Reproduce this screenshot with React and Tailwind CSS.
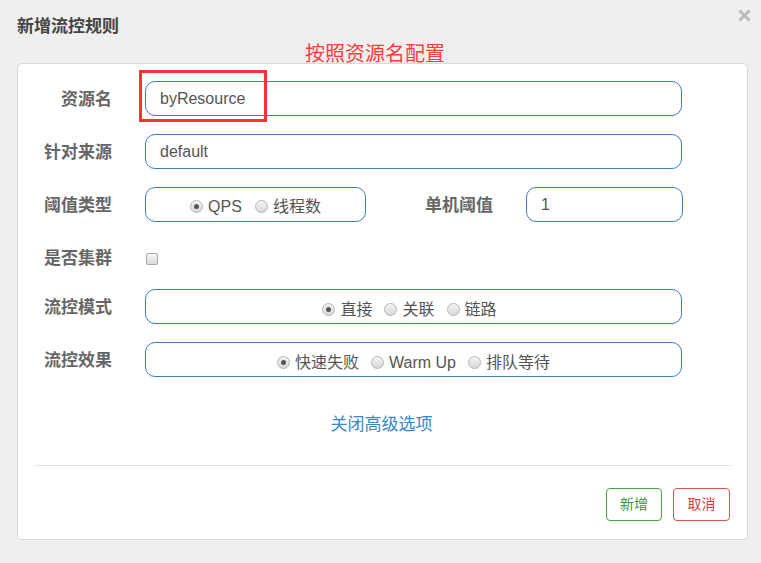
import React from "react";

const FONT = { fontFamily: '"Liberation Sans", "Noto Sans CJK SC", sans-serif' };

function Radio({ checked, label }) {
  return (
    <span className="flex items-center gap-[5px]">
      <span className="w-[13px] h-[13px] rounded-full border border-[#b5b5b5] bg-gradient-to-b from-[#f4f4f4] to-[#d8d8d8] flex items-center justify-center">
        {checked && <span className="w-[5px] h-[5px] rounded-full bg-[#555]" />}
      </span>
      <span className="text-[16px] text-[#555] leading-none">{label}</span>
    </span>
  );
}

function Label({ children, className = "" }) {
  return (
    <div className={"text-right font-bold text-[17px] text-[#666] pt-[3px] " + className}>{children}</div>
  );
}

const boxCls =
  "h-[35px] border border-[#3b7dbf] rounded-[10px] bg-white flex items-center";

export default function App() {
  return (
    <div className="w-[761px] h-[563px] bg-[#efefef] relative overflow-hidden" style={FONT}>
      <div className="h-[63px] pl-[17px] pt-[15px]">
        <div className="text-[17px] font-bold text-[#444] leading-[24px]">新增流控规则</div>
      </div>
      <svg className="absolute left-[738px] top-[9px]" width="13" height="13" viewBox="0 0 13 13">
        <path d="M1.5 1.5 L11.5 11.5 M11.5 1.5 L1.5 11.5" stroke="#bcbcbc" strokeWidth="3" />
      </svg>
      <div className="absolute left-[305px] top-[41px] text-[20px] text-[#ff3b3b] leading-[26px]">按照资源名配置</div>

      <div className="ml-[17px] w-[731px] h-[477px] bg-white border border-[#d9d9d9] rounded-[5px] pt-[17px] flex flex-col">
        <div className="flex items-center h-[35px]">
          <Label className="w-[94px]">资源名</Label>
          <div className={boxCls + " ml-[33px] w-[537px] pl-[14px] text-[16px] text-[#555]"}>byResource</div>
        </div>
        <div className="flex items-center h-[35px] mt-[18px]">
          <Label className="w-[94px]">针对来源</Label>
          <div className={boxCls + " ml-[33px] w-[537px] pl-[14px] text-[16px] text-[#555]"}>default</div>
        </div>
        <div className="flex items-center h-[35px] mt-[18px]">
          <Label className="w-[94px]">阈值类型</Label>
          <div className={boxCls + " ml-[33px] w-[221px] justify-center gap-[13px] pt-[4px]"}>
            <Radio checked label="QPS" />
            <Radio label="线程数" />
          </div>
          <Label className="w-[127px]">单机阈值</Label>
          <div className={boxCls + " ml-[33px] w-[157px] pl-[14px] text-[16px] text-[#555]"}>1</div>
        </div>
        <div className="flex items-center h-[27px] mt-[22px]">
          <Label className="w-[94px]">是否集群</Label>
          <span className="ml-[34px] mt-[2px] w-[12px] h-[12px] rounded-[2px] border border-[#a8a8a8] bg-gradient-to-b from-[#f6f6f6] to-[#dcdcdc]" />
        </div>
        <div className="flex items-center h-[35px] mt-[18px]">
          <Label className="w-[94px]">流控模式</Label>
          <div className={boxCls + " ml-[33px] w-[537px] justify-center gap-[12px] pt-[6px] pr-[8px]"}>
            <Radio checked label="直接" />
            <Radio label="关联" />
            <Radio label="链路" />
          </div>
        </div>
        <div className="flex items-center h-[35px] mt-[18px]">
          <Label className="w-[94px]">流控效果</Label>
          <div className={boxCls + " ml-[33px] w-[537px] justify-center gap-[12px] pt-[6px]"}>
            <Radio checked label="快速失败" />
            <Radio label="Warm Up" />
            <Radio label="排队等待" />
          </div>
        </div>
        <div className="mt-[36px] text-center text-[17px] text-[#3a87c9] leading-[24px] pr-[2px]">关闭高级选项</div>
        <div className="mt-[28px] ml-[17px] w-[696px] h-px bg-[#e3e3e3]" />
        <div className="flex justify-end gap-[11px] mt-[22px] pr-[17px]">
          <button className="w-[56px] h-[33px] border border-[#47a447] rounded-[4px] text-[14px] text-[#3c9a3c] bg-white">新增</button>
          <button className="w-[57px] h-[33px] border border-[#d9534f] rounded-[4px] text-[14px] text-[#d43f3a] bg-white">取消</button>
        </div>
      </div>

      <div className="absolute left-[139px] top-[70px] w-[128px] h-[52px] border-[3px] border-[#ff3333]" />
    </div>
  );
}
